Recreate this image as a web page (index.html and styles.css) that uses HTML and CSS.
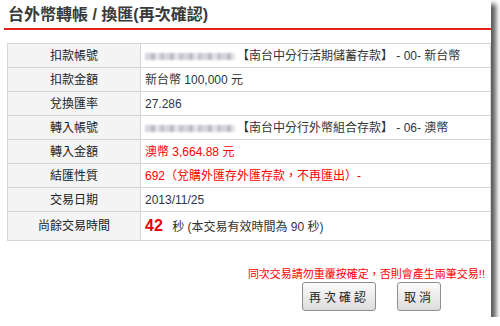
FILE: index.html
```html
<!DOCTYPE html>
<html lang="zh-Hant">
<head>
    <meta charset="UTF-8">
    <title>台外幣轉帳 / 換匯(再次確認)</title>
    <link rel="stylesheet" href="styles.css">
</head>
<body>

<div class="window">
    <h1 class="page-title">台外幣轉帳 / 換匯(再次確認)</h1>

    <table class="confirm-table">
        <tr>
            <th>扣款帳號</th>
            <td><span class="masked"></span>【南台中分行活期儲蓄存款】 - <span class="code">00</span>- 新台幣</td>
        </tr>
        <tr>
            <th>扣款金額</th>
            <td>新台幣 <span class="num">100,000</span> 元</td>
        </tr>
        <tr>
            <th>兌換匯率</th>
            <td><span class="num">27.286</span></td>
        </tr>
        <tr>
            <th>轉入帳號</th>
            <td><span class="masked"></span>【南台中分行外幣組合存款】 - <span class="code">06</span>- 澳幣</td>
        </tr>
        <tr>
            <th>轉入金額</th>
            <td class="red">澳幣 3,664.88 元</td>
        </tr>
        <tr>
            <th>結匯性質</th>
            <td class="red">692（兌購外匯存外匯存款，不再匯出）-</td>
        </tr>
        <tr>
            <th>交易日期</th>
            <td><span class="num">2013/11/25</span></td>
        </tr>
        <tr class="last">
            <th>尚餘交易時間</th>
            <td><span class="countdown">42</span> 秒 (本交易有效時間為 90 秒)</td>
        </tr>
    </table>

    <p class="warning">同次交易請勿重覆按確定，否則會產生兩筆交易!!</p>

    <div class="actions">
        <button class="btn">再次確認</button>
        <button class="btn">取消</button>
    </div>
</div>

</body>
</html>
```

FILE: styles.css
```css
html, body {
    margin: 0;
    padding: 0;
    background: #fff;
    font-family: "Liberation Sans", "Noto Sans CJK TC", sans-serif;
    color: #333;
}

.window {
    width: 491px;
    height: 317px;
    background: #fff;
    box-shadow: 5px 4px 5px rgba(0, 0, 0, 0.65);
    overflow: hidden;
}

.page-title {
    margin: 0 0 0 4px;
    padding: 5px 0 4px 4px;
    font-size: 16px;
    font-weight: bold;
    line-height: 19px;
    color: #3a3a3a;
    border-bottom: 2px solid #e3231b;
}

.confirm-table {
    margin: 13px 0 0 7px;
    width: 484px;
    border-collapse: collapse;
    font-size: 12px;
}

.confirm-table th,
.confirm-table td {
    height: 23px;
    padding: 0 4px;
    border: 1px solid #d6d6d6;
    line-height: 14px;
}

.confirm-table th {
    width: 124px;
    background: #f4f4f4;
    font-weight: normal;
    text-align: center;
    color: #222;
}

.confirm-table td {
    color: #333;
}

.confirm-table td.red {
    color: #f00;
}

.confirm-table .last th,
.confirm-table .last td {
    height: 28px;
}

.masked {
    display: inline-block;
    width: 90px;
    height: 7px;
    margin-right: 2px;
    vertical-align: middle;
    background: repeating-linear-gradient(90deg, #d5d5dc 0 6px, #b9b9c2 6px 10px, #e2e2e6 10px 15px, #c4c4cc 15px 19px);
    filter: blur(1px);
}

.num, .code {
    color: #2b3550;
}

.countdown {
    font-size: 16px;
    font-weight: bold;
    color: #e00;
    margin-right: 6px;
}

.warning {
    margin: 24px 6px 0 0;
    text-align: right;
    font-size: 11px;
    color: #f00;
}

.actions {
    display: flex;
    justify-content: flex-end;
    gap: 21px;
    margin: 1px 50px 0 0;
}

.btn {
    height: 29px;
    padding: 0 6px;
    font-family: "Noto Sans CJK TC", sans-serif;
    font-size: 12px;
    letter-spacing: 3px;
    color: #222;
    background: linear-gradient(#fbfbfb, #dcdcdc);
    border: 1px solid #8e8e8e;
    border-radius: 3px;
}
```
